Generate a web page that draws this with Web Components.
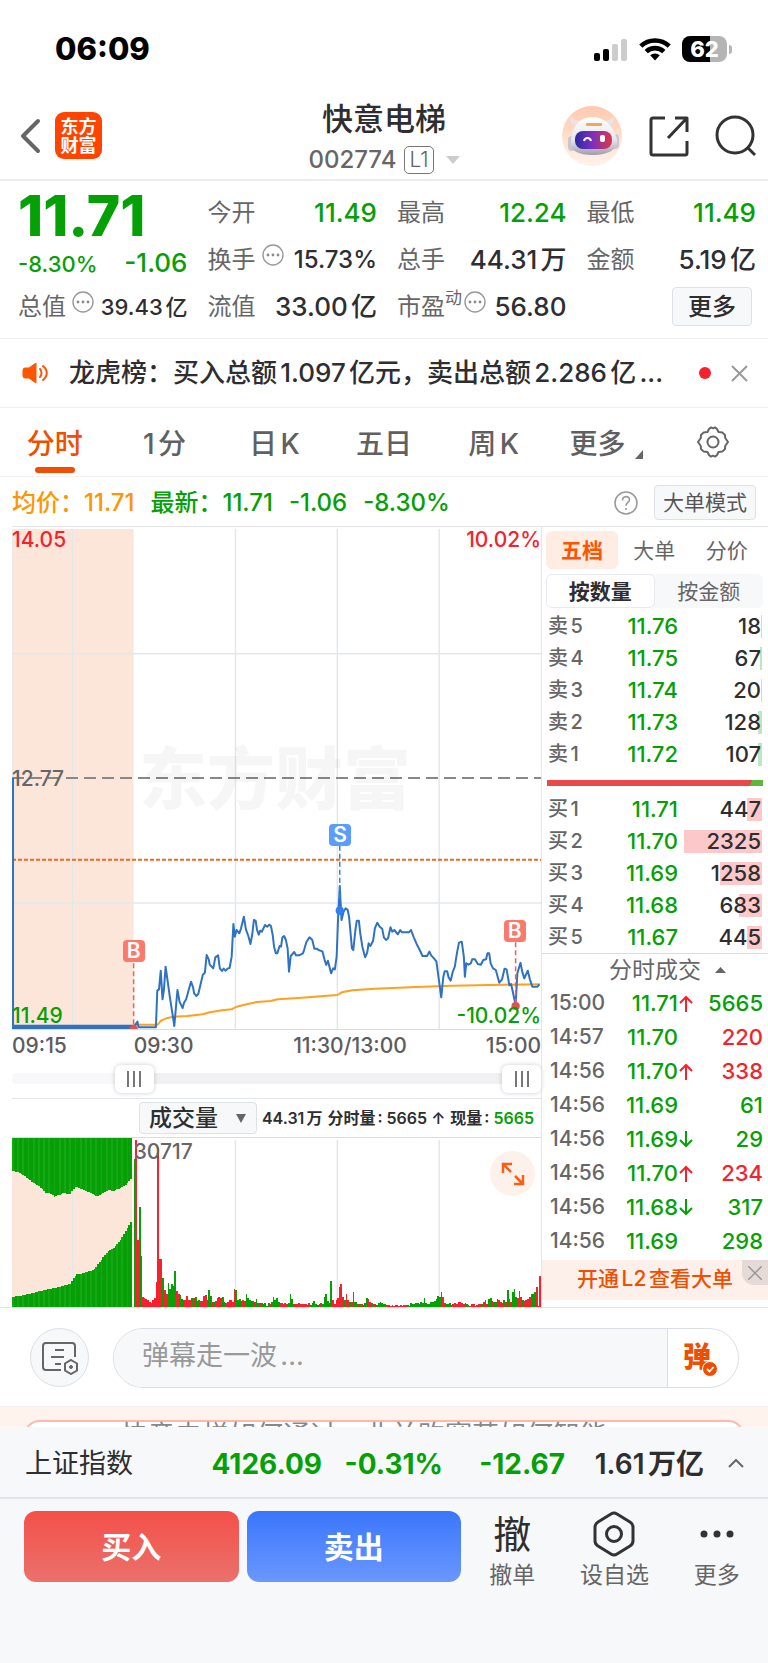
<!DOCTYPE html>
<html lang="zh-CN">
<head>
<meta charset="utf-8">
<meta name="viewport" content="width=device-width, initial-scale=1">
<title>快意电梯 002774</title>
<style>
    :root {
        --up: #f5222d;
        --down: #05a005;
        --brand: #f04e00;
        --ink: #2e2e30;
        --muted: #666;
        --line: #e3e5ea;
        --soft: #f7f8fa;
    }
    body {
        margin: 0;
        background: var(--soft);
        color: var(--ink);
        font-family: Inter, "Noto Sans CJK SC", sans-serif;
        font-weight: 500;
        text-autospace: normal;
    }
    main { background: #fff; }
    .board {
        display: grid;
        grid-template-columns: minmax(0, 1fr) 227px;
        margin-left: 12px;
        border-top: 1px solid var(--line);
    }
    .charts, .book { min-width: 0; }
    .book { border-left: 1px solid var(--line); box-sizing: border-box; }
</style>
</head>
<body>
<main>
    <status-bar></status-bar>
    <stock-header code="002774">快意电梯</stock-header>
    <stock-quote></stock-quote>
    <news-notice>龙虎榜：买入总额1.097亿元，卖出总额2.286亿...</news-notice>
    <period-tabs></period-tabs>
    <chart-info></chart-info>
    <div class="board">
        <div class="charts">
            <price-chart></price-chart>
            <time-range></time-range>
            <volume-chart></volume-chart>
        </div>
        <div class="book">
            <order-book></order-book>
            <trade-list></trade-list>
            <promo-banner>开通L2查看大单</promo-banner>
        </div>
    </div>
    <barrage-bar></barrage-bar>
    <topic-strip>快意电梯如何通过，业并购赛莱如何智能</topic-strip>
</main>
<index-bar></index-bar>
<trade-bar></trade-bar>

<script>
const RESET = `
    :host { display: block; box-sizing: border-box; }
    * { box-sizing: border-box; }
    button, input, select { font: inherit; color: inherit; margin: 0; padding: 0; border: 0; background: none; }
    svg { display: block; fill: none; }
    .up { color: var(--up); }
    .down { color: var(--down); }
`;

class BasePart extends HTMLElement {
    constructor() {
        super();
        this.attachShadow({ mode: 'open' });
    }

    connectedCallback() {
        this.shadowRoot.innerHTML = `<style>${RESET}${this.styles()}</style>${this.markup()}`;
    }

    styles() { return ''; }
    markup() { return '<slot></slot>'; }
}

class StatusBar extends BasePart {
    styles() {
        return `
            :host { display: flex; justify-content: space-between; padding: 31px 36px 31px 55px; color: #000; }
            time { font-size: 31px; line-height: 36px; font-weight: 800; }
            .icons { display: flex; align-items: center; gap: 11px; }
            .battery { display: flex; align-items: center; gap: 2px; }
            .level { width: 45px; height: 26px; border-radius: 8px; background: linear-gradient(90deg, #000 62%, #b5b5b5 62%);
                color: #fff; font-size: 22px; line-height: 26px; font-weight: 800; text-align: center; }
            .nub { width: 3px; height: 9px; border-radius: 0 4px 4px 0; background: #b5b5b5; }
        `;
    }

    markup() {
        return `
            <time>06:09</time>
            <div class="icons">
                <svg width="34" height="23" viewBox="0 0 34 23">
                    <rect x="0" y="15" width="6" height="8" rx="2" fill="#000"/>
                    <rect x="9" y="11" width="6" height="12" rx="2" fill="#000"/>
                    <rect x="18" y="6" width="6" height="17" rx="2" fill="#ccc"/>
                    <rect x="27" y="1" width="6" height="22" rx="2" fill="#ccc"/>
                </svg>
                <svg width="32" height="24" viewBox="0 0 32 24" stroke="#000" stroke-width="4.6">
                    <path d="M1.8 9.2a20.4 20.4 0 0 1 28.4 0"/>
                    <path d="M7.2 14.6a12.8 12.8 0 0 1 17.6 0"/>
                    <path d="M16 23.4l-4.8-5.1a7 7 0 0 1 9.6 0z" fill="#000" stroke="none"/>
                </svg>
                <div class="battery"><div class="level">62</div><div class="nub"></div></div>
            </div>
        `;
    }
}

class StockHeader extends BasePart {
    styles() {
        return `
            :host { display: grid; grid-template-columns: 1fr auto 1fr; align-items: center; padding: 0 11px; border-bottom: 2px solid #ececee; }
            .side { display: flex; align-items: center; padding-bottom: 6px; }
            .left { gap: 14px; padding-left: 9px; }
            .right { justify-content: flex-end; gap: 26px; }
            .logo { display: grid; place-content: center; width: 47px; height: 47px; border-radius: 9px; background: #ff4400; color: #fff;
                font-size: 18px; line-height: 19px; font-weight: 700; text-decoration: none; text-align: center; }
            h1 { margin: 0; font-size: 31px; line-height: 42px; font-weight: 500; text-align: center; }
            .code { display: flex; align-items: center; justify-content: center; gap: 8px; height: 39px; font-size: 24px; color: var(--muted); }
            .code b { padding: 0 4px; border: 1px solid #777; border-radius: 5px; font-size: 21px; line-height: 26px; font-weight: 300; }
            .code svg { margin-left: 4px; }
        `;
    }

    markup() {
        return `
            <div class="side left">
                <button aria-label="返回"><svg width="21" height="36" viewBox="0 0 21 36" stroke="#666" stroke-width="4" stroke-linecap="round" stroke-linejoin="round"><path d="M18 3L3 18l15 15"/></svg></button>
                <a class="logo" href="#">东方<br>财富</a>
            </div>
            <div>
                <h1><slot></slot></h1>
                <div class="code">${this.getAttribute('code')}<b>L1</b><svg width="14" height="8" viewBox="0 0 14 8"><path d="M0 0h14L7 8z" fill="#ccc"/></svg></div>
            </div>
            <div class="side right">
                <button aria-label="助手">
                    <svg width="60" height="60" viewBox="0 0 60 60">
                        <defs>
                            <linearGradient id="halo" x1="0" y1="0" x2="0" y2="1"><stop offset="0" stop-color="#ffc9ad"/><stop offset="1" stop-color="#fff3ec"/></linearGradient>
                            <linearGradient id="shell" x1="0" y1="0" x2="0" y2="1"><stop offset="0" stop-color="#fff"/><stop offset=".6" stop-color="#e6e5ea"/><stop offset="1" stop-color="#a09dac"/></linearGradient>
                            <linearGradient id="visor" x1="0" y1="0" x2="1" y2="0"><stop offset="0" stop-color="#2b2a9c"/><stop offset=".45" stop-color="#7a2fc0"/><stop offset="1" stop-color="#d9384c"/></linearGradient>
                        </defs>
                        <circle cx="30" cy="30" r="30" fill="url(#halo)"/>
                        <path d="M17 21c-6-1-10-5-9-11 3 4 6 5 12 5zM43 21c6-1 10-5 9-11-3 4-6 5-12 5z" fill="#e9e4e8"/>
                        <rect x="6" y="30" width="8" height="15" rx="4" fill="#c9c6d0"/>
                        <rect x="49" y="28" width="8" height="15" rx="4" fill="#c9c6d0"/>
                        <path d="M30 11c12 0 21 8 25 22 2 11-10 16-24 16S8 45 9 36c1-16 9-25 21-25z" fill="url(#shell)"/>
                        <rect x="24" y="17" width="16" height="3" rx="1" fill="#f3a45d"/>
                        <rect x="13" y="25" width="37" height="18" rx="8" fill="url(#visor)"/>
                        <path d="M22 35c1-4 6-4 7 0" stroke="#fff" stroke-width="2"/>
                        <rect x="38" y="29" width="5" height="7" rx="2" fill="#fff"/>
                    </svg>
                </button>
                <button aria-label="分享"><svg width="41" height="42" viewBox="0 0 41 42" stroke="#333" stroke-width="3" stroke-linejoin="round"><path d="M17 3H5a2 2 0 0 0-2 2v33a2 2 0 0 0 2 2h32a2 2 0 0 0 2-2V26M27 3h12v14M38 4L20 23"/></svg></button>
                <button aria-label="搜索"><svg width="42" height="42" viewBox="0 0 42 42" stroke="#333" stroke-width="3"><circle cx="20" cy="20" r="18"/><path d="M32 32l8 8"/></svg></button>
            </div>
        `;
    }
}

const HINT = '<svg class="hint" width="22" height="22" viewBox="0 0 22 22"><circle cx="11" cy="11" r="10" stroke="#999" stroke-width="1.4"/><g fill="#888"><circle cx="6" cy="11" r="1.4"/><circle cx="11" cy="11" r="1.4"/><circle cx="16" cy="11" r="1.4"/></g></svg>';

class StockQuote extends BasePart {
    styles() {
        return `
            :host { display: grid; grid-template-columns: repeat(4, minmax(0, 1fr)); column-gap: 20px; grid-auto-rows: 47px; align-items: center;
                padding: 8px 12px 8px 18px; border-bottom: 1px solid #f0f0f2; }
            .last { grid-row: span 2; align-self: start; }
            .price { font-size: 57px; line-height: 54px; font-weight: 800; }
            .change { display: flex; justify-content: space-between; align-items: baseline; font-size: 26px; line-height: 40px; }
            .change small { font-size: 22px; }
            .cell { display: flex; align-items: center; justify-content: space-between; font-size: 26px; line-height: 36px; white-space: nowrap; }
            .label { display: flex; align-items: center; gap: 6px; font-size: 24px; font-weight: 400; color: var(--muted); }
            .label sup { margin-left: -6px; font-size: 17px; line-height: 18px; align-self: flex-start; }
            .label sup + .hint { margin-left: -4px; }
            .hint { margin-bottom: 10px; }
            .small { font-size: 22px; }
            .fit { font-size: 24px; }
            button { justify-self: end; margin-right: 4px; width: 80px; height: 39px; border: 1px solid #dfe1e8; border-radius: 4px; background: var(--soft); font-size: 24px; line-height: 34px; }
        `;
    }

    cell(label, value, tone = '', kind = '') {
        return `<div class="cell ${kind}"><span class="label">${label}</span><span class="${tone}">${value}</span></div>`;
    }

    markup() {
        return `
            <div class="last down">
                <div class="price">11.71</div>
                <div class="change"><small>-8.30%</small><span>-1.06</span></div>
            </div>
            ${this.cell('今开', '11.49', 'down')}
            ${this.cell('最高', '12.24', 'down')}
            ${this.cell('最低', '11.49', 'down')}
            ${this.cell('换手' + HINT, '15.73%', '', 'fit')}
            ${this.cell('总手', '44.31万')}
            ${this.cell('金额', '5.19亿')}
            ${this.cell('总值' + HINT, '39.43亿', '', 'small')}
            ${this.cell('流值', '33.00亿')}
            ${this.cell('市盈<sup>动</sup>' + HINT, '56.80')}
            <button>更多</button>
        `;
    }
}

class NewsNotice extends BasePart {
    styles() {
        return `
            :host { display: flex; align-items: center; height: 69px; padding: 0 20px 0 22px; border-bottom: 1px solid #f0f0f2; }
            p { flex: 1; margin: 0 0 0 20px; font-size: 26px; line-height: 36px; white-space: nowrap; overflow: hidden; }
            i { width: 12px; height: 12px; margin: 0 20px; border-radius: 50%; background: var(--up); }
        `;
    }

    markup() {
        return `
            <svg width="27" height="22" viewBox="0 0 27 22">
                <path d="M14 1v20L7 16H3a2 2 0 0 1-2-2V8a2 2 0 0 1 2-2h4z" fill="#ff5500" stroke="#ff5500" stroke-linejoin="round"/>
                <path d="M18 7c2 2 2 6 0 8M21 4c5 4 5 10 0 14" stroke="#ff5500" stroke-width="2" stroke-linecap="round"/>
            </svg>
            <p><slot></slot></p>
            <i></i>
            <button aria-label="关闭"><svg width="17" height="17" viewBox="0 0 17 17" stroke="#999" stroke-width="2"><path d="M1 1l15 15M16 1L1 16"/></svg></button>
        `;
    }
}

class PeriodTabs extends BasePart {
    styles() {
        return `
            :host { display: grid; grid-template-columns: repeat(7, 1fr); height: 69px; border-bottom: 1px solid #f0f0f2; }
            button { display: grid; grid-template-rows: 1fr 12px; justify-items: center; align-items: center; padding-bottom: 3px; font-size: 28px; line-height: 40px; color: #606060; }
            .on { color: var(--brand); }
            .on::after { content: ""; width: 40px; height: 6px; border-radius: 3px; background: var(--brand); }
            span { display: flex; align-items: flex-end; gap: 10px; padding-top: 16px; }
            span svg { margin-bottom: 5px; }
            .more { padding-left: 6px; }
        `;
    }

    markup() {
        const tabs = ['分时', '1分', '日K', '五日', '周K'];
        return `
            ${tabs.map((t, i) => `<button class="${i ? '' : 'on'}"><span>${t}</span></button>`).join('')}
            <button class="more"><span>更多<svg width="8" height="9" viewBox="0 0 8 9"><path d="M8 0v9H0z" fill="#666"/></svg></span></button>
            <button aria-label="设置"><span><svg width="32" height="32" viewBox="0 0 32 32" stroke="#666" stroke-width="2" stroke-linejoin="round"><path d="M12 3l2-1.6 2 .9 2-.9L20 3l1.5 3 4 .6L28 9l.2 3L31 16l-2.800 4-.2 3-2.500 2.400-4 .6L20 29l-2 1.600-2-.9-2 .9L12 29l-1.500-3-4-.6L4 23l-.2-3L1 16l2.800-4L4 9l2.500-2.400 4-.6z"/><circle cx="16" cy="16" r="5.500"/></svg></span></button>
        `;
    }
}

class ChartInfo extends BasePart {
    styles() {
        return `
            :host { display: flex; align-items: center; height: 49px; padding: 2px 12px 0; font-size: 24px; line-height: 34px; white-space: nowrap; }
            .avg { color: #ff9500; }
            span + span { margin-left: 16px; }
            .help { margin-left: auto; }
            .mode { width: 102px; height: 35px; margin-left: 16px; border: 1px solid #dfe1e8; border-radius: 4px; background: var(--soft); color: #555; font-size: 21px; font-weight: 400; line-height: 30px; }
        `;
    }

    markup() {
        return `
            <span class="avg">均价：11.71</span>
            <span class="down">最新：11.71</span>
            <span class="down">-1.06</span>
            <span class="down">-8.30%</span>
            <button class="help" aria-label="说明"><svg width="24" height="24" viewBox="0 0 24 24" stroke="#999" stroke-width="1.6"><circle cx="12" cy="12" r="11"/><path d="M8.500 9.500c0-5 7-5 7-.8 0 2.600-3.500 2.800-3.500 6M12 17v2"/></svg></button>
            <button class="mode">大单模式</button>
        `;
    }
}

// Plot space is 1522 units wide; the session starts at x = 350.
const GRID_X = [174, 643, 936, 1229];

const PRICE = `350,682 361,665 364,682 414,682 418,572 423,568 428,512 433,598 437,570 442,500 448,545 454,590 467,678 476,570 482,605 491,624 495,608
501,598 515,545 521,562 524,580 530,588 536,582 549,524 555,518 560,465 566,478 569,494 579,505 585,472 593,466 598,505 604,513 609,506 614,512
620,506 626,504 632,470 637,372 641,410 646,390 654,400 659,385 667,350 673,388 680,408 686,432 691,405 696,360 701,362 705,390 710,404 714,392
719,395 728,375 734,380 740,374 745,378 750,405 754,440 759,460 763,460 770,438 774,440 778,412 783,408 788,420 793,445 797,515 802,468 812,456
817,466 826,466 837,460 841,448 847,426 856,412 864,420 870,446 877,446 882,450 893,454 899,478 904,495 909,482 918,520 924,505 929,508 934,470
938,360 943,258 948,360 954,335 960,325 966,330 970,352 978,445 982,450 988,390 992,362 998,362 1002,400 1008,440 1016,472 1022,458 1026,430
1031,438 1039,422 1044,385 1051,368 1058,380 1065,386 1070,412 1076,420 1082,415 1089,382 1094,395 1100,390 1110,403 1117,390 1122,397 1142,397
1148,390 1156,412 1166,436 1176,456 1181,468 1194,468 1201,455 1206,466 1214,475 1221,484 1235,592 1241,530 1245,514 1252,514 1256,532 1262,542
1268,516 1274,500 1280,460 1286,428 1294,425 1300,470 1303,530 1307,490 1313,494 1320,490 1324,478 1332,478 1340,492 1349,494 1356,480 1364,478
1368,460 1373,460 1377,490 1384,505 1392,510 1402,548 1410,538 1417,506 1423,508 1431,556 1436,552 1449,615 1454,520 1463,488 1468,515 1474,535
1484,512 1490,538 1497,560 1512,560 1517,553`;

const AVERAGE = `350,674 419,674 429,662 444,655 464,650 504,648 549,643 569,637 604,631 632,628 644,621 669,614 704,606 744,603 764,598 824,594
889,589 936,585 949,577 979,571 1044,566 1164,561 1264,557 1414,554 1519,553`;

class PriceChart extends BasePart {
    styles() {
        return `
            .plot { position: relative; display: grid; height: 503px; padding-top: 2px; border-bottom: 1px solid #d9dce3; font-size: 21px; line-height: 22px; }
            .plot > svg { grid-area: 1 / 1; width: 100%; height: 500px; }
            .plot > svg * { vector-effect: non-scaling-stroke; }
            .mark { grid-area: 1 / 1; align-self: center; padding-left: 127px; font-size: 68px; line-height: 80px; font-weight: 900; color: rgba(0, 0, 0, .035); }
            .label { grid-area: 1 / 1; }
            .low { align-self: end; padding-bottom: 2px; }
            .mid { align-self: center; color: var(--muted); }
            .right { justify-self: end; }
            .flag { position: absolute; width: 22px; height: 22px; margin: 1px 0 0 -11px; border-radius: 4px; color: #fff; text-align: center; line-height: 22px; font-weight: 600; }
            .buy { background: #fb7a6b; }
            .sell { background: #5b9dfb; }
            .axis { display: grid; grid-template-columns: 23% 1fr auto; font-size: 21px; line-height: 32px; color: #5c5c5c; }
            .session { display: flex; justify-content: space-between; padding-right: 79px; }
        `;
    }

    markup() {
        const grid = GRID_X.map(x => `<path d="M${x} 0V1500"/>`).join('');
        return `
            <div class="plot">
                <svg viewBox="0 0 1522 1500" preserveAspectRatio="none">
                    <path d="M0 0h350v1500H0z" fill="#fce6da"/>
                    <g stroke="#e3e7ed" stroke-width="1.500">${grid}<path d="M0 374h1522M0 1122h1522M0 0v1500"/></g>
                    <path d="M0 747h1522" stroke="#888" stroke-width="2" stroke-dasharray="12 6"/>
                    <path d="M0 992h1522" stroke="#ee6a22" stroke-width="2" stroke-dasharray="4 2"/>
                    <g transform="translate(0 813)" stroke-linejoin="round">
                        <polyline points="${AVERAGE}" stroke="#ffa01e" stroke-width="2"/>
                        <polyline points="${PRICE}" stroke="#2f72c4" stroke-width="2"/>
                        <path d="M0 682H350" stroke="#2f72c4" stroke-width="5"/>
                        <path d="M3 -66V682" stroke="#2f72c4" stroke-width="2"/>
                        <g stroke-width="1.500" stroke-dasharray="5 3">
                            <path d="M350 490V682M1449 427V615" stroke="#f4604f"/>
                            <path d="M943 137V300" stroke="#3080f5"/>
                        </g>
                        <ellipse cx="943" cy="332" rx="12" ry="13" fill="#2f80f0"/>
                        <ellipse cx="1449" cy="618" rx="12" ry="12" fill="#e5504c"/>
                        <path d="M338 687a12 13 0 0 1 24 0z" fill="#e5504c"/>
                    </g>
                </svg>
                <div class="mark">东方财富</div>
                <span class="label up">14.05</span>
                <span class="label right up">10.02%</span>
                <span class="label mid">12.77</span>
                <span class="label low down">11.49</span>
                <span class="label low right down">-10.02%</span>
                <span class="flag buy" style="left: 23%; top: 82%">B</span>
                <span class="flag sell" style="left: 62%; top: 59%">S</span>
                <span class="flag buy" style="left: 95%; top: 78%">B</span>
            </div>
            <div class="axis"><span>09:15</span><div class="session"><span>09:30</span><span>11:30/13:00</span></div><span>15:00</span></div>
        `;
    }
}

class TimeRange extends BasePart {
    styles() {
        const grip = 'linear-gradient(90deg, #777 0 2px, transparent 2px 6px, #777 6px 8px, transparent 8px 12px, #777 12px 14px) center / 14px 16px no-repeat #fff';
        return `
            :host { display: grid; align-items: center; height: 36px; padding-bottom: 3px; }
            .track, input { grid-area: 1 / 1; }
            .track { height: 11px; border-radius: 4px; background: linear-gradient(90deg, #f8f8fa 22%, #f1f1f4 22%); }
            input { appearance: none; width: 100%; height: 28px; pointer-events: none; }
            input::-webkit-slider-thumb { appearance: none; width: 39px; height: 28px; border-radius: 6px; pointer-events: auto; background: ${grip}; box-shadow: 0 0 5px rgba(0, 0, 0, .2); }
        `;
    }

    markup() {
        return `
            <div class="track"></div>
            <input type="range" min="0" max="100" value="21" aria-label="开始时间">
            <input type="range" min="0" max="100" value="100" aria-label="结束时间">
        `;
    }
}

// One bar per minute: r/g for the colour, then the height.
const VOLUME = `g445 r502 r200 g302 r154 r30 r26 r25 r22 r15 r12 r20 r26 r75 r478 r143 r143 g87 r50 r40 g73 g55 g70 g62 g107 r47 r40 g35 g25 g22
r20 r32 r20 r20 g28 r28 g30 r18 g20 r18 r18 r33 r35 r20 g52 g32 r16 g16 r18 r28 r30 r26 g30 g14 r12 r14 g20 r20 r16 r55
g50 g20 g25 g18 r20 r18 g38 g26 g20 g18 g18 r16 g24 g12 r12 g12 r10 g12 g4 g12 r8 g14 g30 g22 g26 g16 r12 r12 r10 r12
r8 g12 g38 g24 r8 g10 r10 r12 r8 r10 r8 r8 r6 r12 g6 g12 g18 g10 g6 r10 r12 g8 g30 g38 g18 g12 g78 r22 r10 r22
r26 r60 r70 r30 g20 r40 r20 g14 r16 g44 g16 g14 r10 g10 r8 g6 g12 g26 r24 r14 g12 r10 g8 g6 g12 g16 g12 g8 r8 r6
r5 r4 r6 r4 r5 r6 r4 r5 r4 r5 r6 g6 r4 g12 g10 g8 g12 g12 g10 g14 g12 g28 g12 g8 g10 g14 g16 g18 g24 g34
g30 g44 r30 r12 g10 g8 g12 r6 r10 r12 r10 r14 r16 r12 r10 g12 g8 g6 r4 r8 r10 r4 r6 r8 r10 g10 r14 r20 r10 g24
g26 r18 g14 g16 g24 r20 r14 r12 g20 r14 g50 g24 r16 g44 g55 g30 r28 r48 r30 g22 r18 r20 r24 r30 r38 g40 g46 r60 r4 r92`.split(/\s+/);

// Auction volume outlines as [x, y], unmatched above and matched below.
const UNMATCHED = [[0, 98], [14, 102], [26, 108], [44, 122], [64, 138], [79, 148], [94, 164], [114, 168], [118, 177], [144, 166], [166, 167], [172, 156], [182, 146], [204, 156], [234, 170], [244, 176], [276, 154], [286, 160], [319, 146], [346, 118]];
const MATCHED = [[0, 478], [24, 474], [59, 466], [94, 456], [134, 448], [167, 438], [171, 426], [182, 411], [214, 403], [234, 396], [249, 374], [274, 341], [289, 333], [309, 308], [324, 281], [339, 254], [346, 236]];

function levelAt(points, x) {
    const i = Math.max(1, points.findIndex(p => p[0] >= x));
    const [a, b] = [points[i - 1], points[i]];
    return Math.round(a[1] + (b[1] - a[1]) * (x - a[0]) / (b[0] - a[0]));
}

class VolumeChart extends BasePart {
    styles() {
        return `
            header { display: flex; align-items: center; justify-content: flex-end; gap: 5px; height: 40px; padding-right: 7px; border-top: 1px solid var(--line); border-bottom: 1px solid #d9dce3;
                font-size: 16px; line-height: 24px; font-weight: 600; white-space: nowrap; }
            .pick { display: grid; align-items: center; width: 118px; height: 32px; border: 1px solid #dfe1e8; border-radius: 4px; background: var(--soft); font-weight: 500; }
            .pick > * { grid-area: 1 / 1; }
            .pick svg { justify-self: end; margin-right: 10px; pointer-events: none; }
            select { appearance: none; width: 100%; padding-left: 9px; font-size: 23px; line-height: 28px; }
            .plot { display: grid; height: 169px; }
            .plot > * { grid-area: 1 / 1; }
            .plot svg.bars { width: 100%; height: 169px; }
            .grid * { vector-effect: non-scaling-stroke; }
            .peak { padding: 2px 0 0 23%; font-size: 21px; line-height: 24px; color: var(--muted); }
            .expand { display: grid; place-content: center; justify-self: end; width: 45px; height: 45px; margin: 13px 6px 0 0; border-radius: 50%; background: #fdf1eb; }
        `;
    }

    auction() {
        let out = '';
        for (let x = 0; x < 344; x += 5) {
            const top = levelAt(UNMATCHED, x);
            const base = levelAt(MATCHED, x);
            const tone = x % 15 ? '#05a005' : '#16a616';
            out += `<path d="M${x} 0h5v${top}h-5zM${x} ${base}h5V508h-5z" fill="${tone}"/>`;
        }
        return out;
    }

    bars() {
        return VOLUME.map((bar, i) => {
            const h = Number(bar.slice(1));
            const x = Math.round(350 + i * 4.88);
            return `<rect x="${x}" y="${508 - h}" width="5" height="${h}" fill="${bar[0] === 'r' ? '#f5222d' : '#05a005'}"/>`;
        }).join('');
    }

    markup() {
        return `
            <header>
                <div class="pick">
                    <select aria-label="指标"><option>成交量</option></select>
                    <svg width="10" height="9" viewBox="0 0 10 9"><path d="M0 0h10L5 9z" fill="#666"/></svg>
                </div>
                <span>44.31万</span><span>分时量: 5665 ↑</span><span>现量: <span class="down">5665</span></span>
            </header>
            <div class="plot">
                <svg class="bars" viewBox="0 0 1522 508" preserveAspectRatio="none">
                    <path d="M0 0h346v508H0z" fill="#fce6da"/>
                    <g class="grid" stroke="#e3e7ed" stroke-width="1.500">${GRID_X.map(x => `<path d="M${x} 6V508"/>`).join('')}</g>
                    <g shape-rendering="crispEdges">${this.auction()}${this.bars()}</g>
                </svg>
                <span class="peak">30717</span>
                <button class="expand" aria-label="全屏"><svg width="24" height="24" viewBox="0 0 24 24" stroke="#f5601a" stroke-width="2.500"><path d="M2 11V2h9M2 2l8 8M22 13v9h-9M22 22l-8-8"/></svg></button>
            </div>
        `;
    }
}

class OrderBook extends BasePart {
    styles() {
        return `
            :host { padding: 4px 5px 0 4px; }
            .tabs { display: grid; grid-template-columns: 72px 1fr 1fr; height: 38px; font-size: 21px; color: var(--muted); }
            .tabs button { font-weight: 400; padding-bottom: 2px; }
            .tabs .on { border-radius: 6px; background: #ffece3; color: #ff5500; font-weight: 700; }
            .switch { display: grid; grid-template-columns: 1fr 1fr; height: 34px; margin: 5px 0 2px; border-radius: 6px; background: var(--soft); font-size: 21px; color: var(--muted); }
            .switch button { font-weight: 400; padding-bottom: 2px; }
            .switch .on { border: 1px solid #e8eaef; border-radius: 6px; background: #fff; color: var(--ink); font-weight: 600; }
            table { width: 100%; border-collapse: collapse; table-layout: fixed; font-size: 22px; line-height: 32px; }
            th, td { padding: 0; height: 32px; text-align: right; }
            th { width: 48px; padding-left: 2px; text-align: left; font-size: 20px; font-weight: 500; color: var(--muted); white-space: nowrap; }
            td.price { width: 84px; }
            td.size { padding-right: 2px; background: linear-gradient(var(--bar), var(--bar)) right 1px center / var(--w) 23px no-repeat; }
            .ratio { height: 6px; margin: 10px 0 7px 1px; background: linear-gradient(110deg, #e9494b 94%, #5cb83c 94%); }
        `;
    }

    rows(side, list, bar) {
        return `<table>${list.map(([n, price, size]) => `
            <tr><th scope="row">${side}${n}</th><td class="price down">${price}</td>
            <td class="size" style="--bar: ${bar}; --w: ${Math.max(1, Math.round(size / 30))}px">${size}</td></tr>`).join('')}</table>`;
    }

    markup() {
        return `
            <div class="tabs"><button class="on">五档</button><button>大单</button><button>分价</button></div>
            <div class="switch"><button class="on">按数量</button><button>按金额</button></div>
            ${this.rows('卖', [[5, '11.76', 18], [4, '11.75', 67], [3, '11.74', 20], [2, '11.73', 128], [1, '11.72', 107]], '#bfe6bf')}
            <div class="ratio"></div>
            ${this.rows('买', [[1, '11.71', 447], [2, '11.70', 2325], [3, '11.69', 1258], [4, '11.68', 683], [5, '11.67', 445]], '#fdc8c9')}
        `;
    }
}

class TradeList extends BasePart {
    styles() {
        return `
            :host { border-top: 1px solid #d9dce3; padding: 0 5px 0 8px; }
            button { display: flex; align-items: center; justify-content: center; gap: 14px; width: 100%; padding-left: 22px; font-size: 23px; line-height: 32px; font-weight: 400; color: var(--muted); }
            table { width: 100%; border-collapse: collapse; table-layout: fixed; font-size: 22px; line-height: 34px; }
            td { padding: 0; height: 34px; text-align: right; }
            .time { width: 58px; text-align: left; font-size: 21px; color: var(--muted); }
            .price { width: 70px; }
            .dir { width: 16px; }
            .dir svg { width: 14px; margin-left: 1px; }
        `;
    }

    arrow(dir) {
        if (dir === 'up') return '<svg width="14" height="17" viewBox="0 0 14 17" stroke="#f5222d" stroke-width="2"><path d="M7 17V2M1 8l6-6 6 6"/></svg>';
        if (dir === 'down') return '<svg width="14" height="17" viewBox="0 0 14 17" stroke="#05a005" stroke-width="2"><path d="M7 0v15M1 9l6 6 6-6"/></svg>';
        return '';
    }

    markup() {
        const trades = [
            ['15:00', '11.71', 'up', 5665, 'down'],
            ['14:57', '11.70', '', 220, 'up'],
            ['14:56', '11.70', 'up', 338, 'up'],
            ['14:56', '11.69', '', 61, 'down'],
            ['14:56', '11.69', 'down', 29, 'down'],
            ['14:56', '11.70', 'up', 234, 'up'],
            ['14:56', '11.68', 'down', 317, 'down'],
            ['14:56', '11.69', '', 298, 'down'],
        ];
        return `
            <button>分时成交<svg width="11" height="6" viewBox="0 0 11 6"><path d="M0 6L5.500 0 11 6z" fill="#666"/></svg></button>
            <table>${trades.map(([time, price, dir, size, tone]) => `
                <tr><td class="time">${time}</td><td class="price down">${price}</td><td class="dir">${this.arrow(dir)}</td><td class="${tone}">${size}</td></tr>`).join('')}
            </table>
        `;
    }
}

class PromoBanner extends BasePart {
    styles() {
        return `
            :host { position: relative; margin: 2px 0 7px; background: #fdf0ea; text-align: center; }
            a { display: block; font-size: 21px; line-height: 38px; padding-bottom: 2px; color: var(--brand); text-decoration: none; }
            button { position: absolute; top: 0; right: 0; display: grid; place-content: center; width: 26px; height: 25px; border-bottom-left-radius: 12px; background: #e6dad6; }
        `;
    }

    markup() {
        return `
            <a href="#"><slot></slot></a>
            <button aria-label="关闭"><svg width="14" height="14" viewBox="0 0 14 14" stroke="#999" stroke-width="1.500"><path d="M0 0l14 14M14 0L0 14"/></svg></button>
        `;
    }
}

class BarrageBar extends BasePart {
    styles() {
        return `
            :host { display: flex; gap: 24px; padding: 20px 29px 18px 30px; border-top: 1px solid var(--line); border-bottom: 1px solid #f3ecea; }
            .list { display: grid; place-content: center; width: 59px; height: 59px; border: 1px solid #dcdee5; border-radius: 50%; background: var(--soft); }
            .box { display: flex; flex: 1; height: 60px; border: 1px solid #dcdee5; border-radius: 30px; overflow: hidden; }
            input { flex: 1; min-width: 0; padding: 0 0 6px 28px; background: var(--soft); font-size: 27px; font-weight: 400; }
            input::placeholder { color: #999; }
            .send { display: grid; place-content: center; width: 71px; border-left: 1px solid #dcdee5; color: var(--brand); font-size: 28px; line-height: 32px; font-weight: 800; }
            .send > * { grid-area: 1 / 1; }
            .send span { margin: -2px 6px 0 -6px; }
            .send svg { place-self: end; margin: 0 -1px -4px 0; }
        `;
    }

    markup() {
        return `
            <button class="list" aria-label="弹幕设置"><svg width="37" height="34" viewBox="0 0 37 34" stroke="#666" stroke-width="2"><path d="M34 16V5a3 3 0 0 0-3-3H5a3 3 0 0 0-3 3v21a3 3 0 0 0 3 3h15"/><path d="M14 9h9M10 16h13M14 23h6"/><path d="M30 19l6 3.500v7L30 33l-6-3.500v-7z"/><circle cx="30" cy="26" r="1.500" fill="#666" stroke-width="1"/></svg></button>
            <div class="box">
                <input type="text" placeholder="弹幕走一波..." aria-label="弹幕">
                <button class="send"><span>弹</span><svg width="16" height="16" viewBox="0 0 16 16"><circle cx="8" cy="8" r="7.500" fill="#f04e00" stroke="#fff"/><path d="M5 8l2.500 2.500L11.500 6" stroke="#fff" stroke-width="1.800"/></svg></button>
            </div>
        `;
    }
}

// Only the top edge of the topic card peeks out above the index bar.
class TopicStrip extends BasePart {
    styles() {
        return `
            :host { height: 20px; padding: 13px 24px 0; overflow: hidden; background: #fff3ee; }
            a { display: block; padding-left: 95px; border: 2px solid #ffb8ab; border-radius: 18px; background: #fff; color: #888; font-size: 27px; line-height: 27px; font-weight: 400; text-decoration: none; }
        `;
    }

    markup() {
        return '<a href="#"><slot></slot></a>';
    }
}

class IndexBar extends BasePart {
    styles() {
        return `
            :host { display: grid; grid-template-columns: 1fr auto 121px 122px 139px 40px; align-items: center; height: 72px; padding: 3px 24px 0 25px; border-bottom: 2px solid #e4e5e8;
                font-size: 28px; line-height: 38px; font-weight: 700; text-align: right; white-space: nowrap; }
            .name { font-size: 27px; font-weight: 400; text-align: left; }
            .total { font-weight: 600; }
            button { justify-self: end; }
        `;
    }

    markup() {
        return `
            <span class="name">上证指数</span>
            <span class="down">4126.09</span><span class="down">-0.31%</span><span class="down">-12.67</span><span class="total">1.61万亿</span>
            <button aria-label="展开"><svg width="16" height="9" viewBox="0 0 16 9" stroke="#666" stroke-width="2"><path d="M1 8l7-7 7 7"/></svg></button>
        `;
    }
}

class TradeBar extends BasePart {
    styles() {
        return `
            :host { display: grid; grid-template-columns: 437fr 307fr; padding: 12px 0 72px 24px; }
            .deal { display: grid; grid-template-columns: 1fr 1fr; gap: 8px; height: 71px; }
            .deal button { padding-bottom: 3px; border-radius: 12px; color: #fff; font-size: 30px; font-weight: 700; }
            .buy { background: linear-gradient(#f4504a, #eb716b); }
            .sell { background: linear-gradient(#3a76fb, #6b97ff); }
            .tools { display: grid; grid-template-columns: repeat(3, 1fr); }
            .tools button { display: grid; grid-template-rows: 46px 34px; justify-items: center; align-items: center; font-size: 23px; line-height: 32px; font-weight: 400; color: var(--muted); }
            .tools span { align-self: end; }
            .tools b { font-size: 38px; line-height: 44px; font-weight: 400; color: var(--ink); }
        `;
    }

    markup() {
        return `
            <div class="deal"><button class="buy">买入</button><button class="sell">卖出</button></div>
            <div class="tools">
                <button><b>撤</b><span>撤单</span></button>
                <button><svg width="42" height="46" viewBox="0 0 42 46" stroke="#333" stroke-width="3" stroke-linejoin="round"><path d="M18 3q3-2 6 0l13 8q3 2 3 5v14q0 3-3 5l-13 8q-3 2-6 0L5 35q-3-2-3-5V16q0-3 3-5z"/><circle cx="21" cy="23" r="7.500"/></svg><span>设自选</span></button>
                <button><svg width="34" height="8" viewBox="0 0 34 8"><g fill="#333"><circle cx="4" cy="4" r="3.500"/><circle cx="17" cy="4" r="3.500"/><circle cx="30" cy="4" r="3.500"/></g></svg><span>更多</span></button>
            </div>
        `;
    }
}

customElements.define('status-bar', StatusBar);
customElements.define('stock-header', StockHeader);
customElements.define('stock-quote', StockQuote);
customElements.define('news-notice', NewsNotice);
customElements.define('period-tabs', PeriodTabs);
customElements.define('chart-info', ChartInfo);
customElements.define('price-chart', PriceChart);
customElements.define('time-range', TimeRange);
customElements.define('volume-chart', VolumeChart);
customElements.define('order-book', OrderBook);
customElements.define('trade-list', TradeList);
customElements.define('promo-banner', PromoBanner);
customElements.define('barrage-bar', BarrageBar);
customElements.define('topic-strip', TopicStrip);
customElements.define('index-bar', IndexBar);
customElements.define('trade-bar', TradeBar);
</script>
</body>
</html>
